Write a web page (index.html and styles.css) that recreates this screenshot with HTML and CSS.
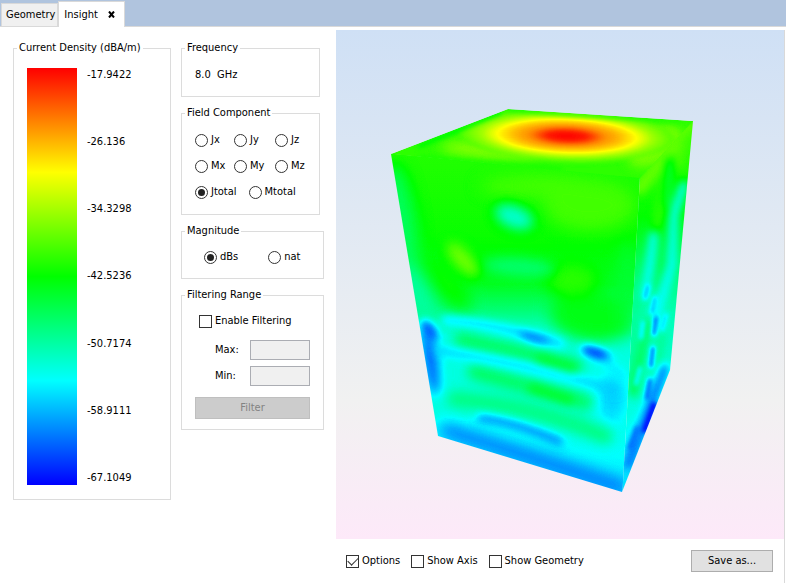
FILE: index.html
```html
<!DOCTYPE html>
<html lang="en">
<head>
  <meta charset="UTF-8" />
  <meta name="viewport" content="width=device-width, initial-scale=1.0"/>
  <title>Insight</title>
  <link rel="stylesheet" href="styles.css">
</head>
<body>

  <!-- Tabs -->
  <nav class="tabs">
    <a class="tab" href="#geometry">Geometry</a>
    <div class="tab active">
      <a href="#insight">Insight</a>
      <button type="button" class="close" aria-label="Close">
        <svg width="7" height="7" viewBox="0 0 7 7"><path d="M1 0.5L6 6.5M6 0.5L1 6.5" stroke="#000" stroke-width="2"/></svg>
      </button>
    </div>
  </nav>

  <main class="insight" id="insight">

    <!-- Color scale -->
    <fieldset class="density">
      <legend>Current Density (dBA/m)</legend>
      <div class="scale">
        <div class="scale-bar"></div>
        <div class="scale-values">
          <span>-17.9422</span>
          <span>-26.136</span>
          <span>-34.3298</span>
          <span>-42.5236</span>
          <span>-50.7174</span>
          <span>-58.9111</span>
          <span>-67.1049</span>
        </div>
      </div>
    </fieldset>

    <!-- Settings -->
    <form class="settings">
      <fieldset class="narrow frequency">
        <legend>Frequency</legend>
        <span>8.0&nbsp; GHz</span>
      </fieldset>

      <fieldset class="narrow component">
        <legend>Field Component</legend>
        <div class="radio-grid">
          <label><input type="radio" name="component">Jx</label>
          <label><input type="radio" name="component">Jy</label>
          <label><input type="radio" name="component">Jz</label>
          <label><input type="radio" name="component">Mx</label>
          <label><input type="radio" name="component">My</label>
          <label><input type="radio" name="component">Mz</label>
        </div>
        <div class="radio-row">
          <label><input type="radio" name="component" checked>Jtotal</label>
          <label><input type="radio" name="component">Mtotal</label>
        </div>
      </fieldset>

      <fieldset class="magnitude">
        <legend>Magnitude</legend>
        <div class="radio-row">
          <label><input type="radio" name="magnitude" checked>dBs</label>
          <label><input type="radio" name="magnitude">nat</label>
        </div>
      </fieldset>

      <fieldset class="filtering">
        <legend>Filtering Range</legend>
        <label class="enable"><input type="checkbox">Enable Filtering</label>
        <div class="range"><label for="max">Max:</label><input type="text" id="max" disabled></div>
        <div class="range"><label for="min">Min:</label><input type="text" id="min" disabled></div>
        <button type="button" class="filter-btn" disabled>Filter</button>
      </fieldset>
    </form>

    <!-- 3D view -->
    <section class="view">
      <div class="scene">
        <svg viewBox="336 30 448 509" role="img" aria-label="Current density on the box">
          <defs>
            <!-- gray level -> blue, cyan, green, yellow, red -->
            <filter id="jet" filterUnits="userSpaceOnUse" x="336" y="30" width="448" height="509" color-interpolation-filters="sRGB">
              <feComponentTransfer>
                <feFuncR type="table" tableValues="0 0 0 1 1"/>
                <feFuncG type="table" tableValues="0 1 1 1 0"/>
                <feFuncB type="table" tableValues="1 1 0 0 0"/>
              </feComponentTransfer>
            </filter>
            <clipPath id="box"><path d="M391 154L508 109L693 121L670 370L622 492L438 436Z"/></clipPath>
            <clipPath id="top"><path d="M391 154L508 109L693 121L640 178Z"/></clipPath>
            <clipPath id="front"><path d="M385 153L640 177L622 500L432 440Z"/></clipPath>
            <clipPath id="side"><path d="M640 177L700 112L675 375L622 500Z"/></clipPath>
            <linearGradient id="frontBase" gradientUnits="userSpaceOnUse" x1="0" y1="154" x2="0" y2="480">
              <stop offset="0" stop-color="#888"/>
              <stop offset="0.25" stop-color="#828282"/>
              <stop offset="0.4" stop-color="#787878"/>
              <stop offset="0.48" stop-color="#626262"/>
              <stop offset="0.56" stop-color="#484848"/>
              <stop offset="0.8" stop-color="#484848"/>
              <stop offset="1" stop-color="#3c3c3c"/>
            </linearGradient>
            <linearGradient id="sideBase" gradientUnits="userSpaceOnUse" x1="640" y1="150" x2="655" y2="480">
              <stop offset="0" stop-color="#8c8c8c"/>
              <stop offset="0.2" stop-color="#808080"/>
              <stop offset="0.35" stop-color="#686868"/>
              <stop offset="0.5" stop-color="#525252"/>
              <stop offset="0.75" stop-color="#4a4a4a"/>
              <stop offset="1" stop-color="#383838"/>
            </linearGradient>
            <radialGradient id="hot">
              <stop offset="0" stop-color="#fff"/>
              <stop offset="0.18" stop-color="#fafafa"/>
              <stop offset="0.35" stop-color="#dcdcdc"/>
              <stop offset="0.5" stop-color="#d0d0d0"/>
              <stop offset="0.66" stop-color="#bebebe"/>
              <stop offset="0.8" stop-color="#a6a6a6"/>
              <stop offset="1" stop-color="#929292"/>
            </radialGradient>
          </defs>

          <g clip-path="url(#box)">
            <g filter="url(#jet)">
              <!-- front face -->
              <g clip-path="url(#front)">
                <rect x="336" y="100" width="320" height="420" fill="url(#frontBase)"/>
                <g class="blur-8">
                  <ellipse cx="590" cy="205" rx="46" ry="26" fill="#909090"/>
                  <ellipse cx="540" cy="186" rx="60" ry="12" fill="#909090"/>
                  <ellipse cx="402" cy="225" rx="14" ry="62" transform="rotate(-8 402 225)" fill="#686868"/>
                  <ellipse cx="418" cy="295" rx="15" ry="34" transform="rotate(-25 418 295)" fill="#585858"/>
                  <ellipse cx="448" cy="285" rx="12" ry="32" transform="rotate(-40 448 285)" fill="#828282"/>
                  <ellipse cx="592" cy="316" rx="42" ry="26" transform="rotate(8 592 316)" fill="#7a7a7a"/>
                  <ellipse cx="628" cy="290" rx="10" ry="50" fill="#727272"/>
                  <ellipse cx="572" cy="280" rx="26" ry="16" fill="#8a8a8a"/>
                  <ellipse cx="612" cy="398" rx="14" ry="26" fill="#343434"/>
                  <path d="M445 430Q530 456 622 488" stroke="#181818" stroke-width="14"/>
                </g>
                <g class="blur-6">
                  <ellipse cx="514" cy="217" rx="20" ry="11" transform="rotate(22 514 217)" fill="#4c4c4c"/>
                  <ellipse cx="463" cy="260" rx="9" ry="22" transform="rotate(-42 463 260)" fill="#9c9c9c"/>
                  <ellipse cx="519" cy="267" rx="36" ry="9" transform="rotate(4 519 267)" fill="#646464"/>
                  <path d="M462 340Q510 350 575 366" stroke="#686868" stroke-width="17"/>
                  <path d="M475 372Q520 384 585 402" stroke="#686868" stroke-width="16"/>
                  <path d="M455 399Q530 405 605 436" stroke="#606060" stroke-width="16"/>
                  <ellipse cx="431" cy="362" rx="6" ry="34" transform="rotate(-8 431 362)" fill="#101010"/>
                </g>
                <g class="blur-4">
                  <path d="M445 320Q500 324 560 344" stroke="#323232" stroke-width="8"/>
                  <path d="M440 351Q520 362 615 390" stroke="#343434" stroke-width="8"/>
                  <path d="M480 418Q515 422 560 442" stroke="#181818" stroke-width="6"/>
                  <path d="M540 359L572 369" stroke="#787878" stroke-width="8"/>
                  <path d="M532 388L570 400" stroke="#787878" stroke-width="8"/>
                  <ellipse cx="429" cy="330" rx="6" ry="12" transform="rotate(-35 429 330)" fill="#141414"/>
                  <ellipse cx="534" cy="338" rx="16" ry="4" transform="rotate(18 534 338)" fill="#181818"/>
                  <ellipse cx="596" cy="353" rx="16" ry="5" transform="rotate(20 596 353)" fill="#080808"/>
                  <path d="M606 362L622 376" stroke="#3c3c3c" stroke-width="10"/>
                </g>
              </g>

              <!-- side face -->
              <g clip-path="url(#side)">
                <rect x="600" y="100" width="100" height="420" fill="url(#sideBase)"/>
                <g class="blur-4">
                  <path d="M640 188L688 126" stroke="#989898" stroke-width="14"/>
                  <path d="M678 165L684 130" stroke="#949494" stroke-width="7"/>
                  <path d="M654 240L668 165" stroke="#8c8c8c" stroke-width="8"/>
                  <path d="M670 160L667 205" stroke="#646464" stroke-width="5"/>
                  <path d="M684 185L674 215L672 265L655 320" stroke="#3c3c3c" stroke-width="8"/>
                  <path d="M654 235L646 295" stroke="#3c3c3c" stroke-width="8"/>
                  <path d="M662 258L652 290" stroke="#707070" stroke-width="4"/>
                  <path d="M636 300L630 390" stroke="#606060" stroke-width="6"/>
                  <path d="M648 320L634 395" stroke="#747474" stroke-width="6"/>
                  <path d="M662 335L654 380" stroke="#606060" stroke-width="6"/>
                  <path d="M664 368L646 418L628 465" stroke="#181818" stroke-width="9"/>
                </g>
                <g class="blur-2">
                  <path d="M648 286L645 298M655 298L652 312" stroke="#2c2c2c" stroke-width="4"/>
                  <path d="M656 318L654 334M653 348L651 366M650 380L647 398" stroke="#141414" stroke-width="4"/>
                  <path d="M643 322L641 338M640 368L636 384M666 315L662 330" stroke="#2c2c2c" stroke-width="3"/>
                  <path d="M637 428L630 448" stroke="#181818" stroke-width="4"/>
                  <path d="M654 405L645 430" stroke="#000" stroke-width="6"/>
                </g>
              </g>

              <!-- top face -->
              <g clip-path="url(#top)">
                <rect x="380" y="100" width="330" height="90" fill="#8b8b8b"/>
                <g class="blur-6">
                  <ellipse cx="490" cy="150" rx="50" ry="8" transform="rotate(4 490 150)" fill="#a2a2a2"/>
                  <ellipse cx="655" cy="146" rx="30" ry="16" transform="rotate(-30 655 146)" fill="#a0a0a0"/>
                </g>
                <g class="blur-2">
                  <ellipse cx="567" cy="136" rx="108" ry="26" transform="rotate(2 567 136)" fill="url(#hot)"/>
                  <path d="M420 146L500 113" stroke="#7c7c7c" stroke-width="4"/>
                  <path d="M420 157L560 169" stroke="#848484" stroke-width="3"/>
                  <path d="M510 111L680 122" stroke="#868686" stroke-width="3"/>
                </g>
              </g>
            </g>
          </g>
        </svg>
      </div>

      <div class="view-bar">
        <label><input type="checkbox" checked>Options</label>
        <label><input type="checkbox">Show Axis</label>
        <label><input type="checkbox">Show Geometry</label>
        <button type="button" class="save-btn">Save as...</button>
      </div>
    </section>

  </main>
</body>
</html>
```
FILE: styles.css
```css
* {
  box-sizing: border-box;
}

body {
  margin: 0;
  min-height: 100vh;
  display: flex;
  flex-direction: column;
  background: #fff;
  color: #000;
  font-family: Tahoma, "DejaVu Sans Condensed", "Noto Sans", sans-serif;
  font-size: 11px;
  line-height: 14px;
}

input, button {
  font: inherit;
  color: inherit;
  margin: 0;
}

/* Tabs */
.tabs {
  display: flex;
  align-items: flex-end;
  height: 27px;
  background: #b0c4de;
  border-bottom: 1px solid #d9d9d9;
}

.tabs a {
  color: #000;
  text-decoration: none;
}

.tab {
  height: 23px;
  margin-left: 1px;
  padding: 4px 2px 0 4px;
  background: #f0f0f0;
  border: 1px solid #d9d9d9;
  border-bottom: none;
}

.tab.active {
  display: flex;
  align-items: center;
  gap: 10px;
  height: 26px;
  margin: 0 0 -1px 0;
  padding: 0 9px 0 5px;
  background: #fff;
}

.close {
  display: flex;
  padding: 0;
  border: none;
  background: none;
}

/* Layout */
.insight {
  flex: 1;
  display: flex;
}

fieldset {
  --side: 13px;
  min-width: 0;
  margin: 0;
  padding: 0 var(--side);
  border: 1px solid #dcdcdc;
}

legend {
  margin-left: calc(3px - var(--side));
  padding: 0 2px;
}

label {
  display: flex;
  align-items: center;
  gap: 3px;
  white-space: nowrap;
}

/* Color scale */
.density {
  align-self: flex-start;
  flex: none;
  width: 158px;
  margin: 14px 10px 0 13px;
  padding-top: 13px;
  padding-bottom: 14px;
}

.scale {
  display: flex;
  gap: 10px;
}

.scale-bar {
  width: 50px;
  height: 417px;
  background: linear-gradient(#f00, #ff0, #0f0, #0ff, #00f);
}

.scale-values {
  display: flex;
  flex-direction: column;
  justify-content: space-between;
}

/* Settings */
.settings {
  flex: none;
  display: flex;
  flex-direction: column;
  gap: 9px;
  width: 143px;
  margin: 14px 12px 0 0;
}

.narrow {
  width: 139px;
}

.frequency {
  padding-top: 13px;
  padding-bottom: 14px;
}

.component {
  padding-top: 7px;
  padding-bottom: 9px;
}

.radio-grid {
  display: grid;
  grid-template-columns: 39px 41px 1fr;
}

.radio-grid label, .radio-row label {
  height: 26px;
}

.radio-row {
  display: flex;
  gap: 12px;
}

.magnitude {
  --side: 22px;
  padding-top: 6px;
  padding-bottom: 8px;
}

.magnitude .radio-row {
  gap: 30px;
}

.filtering {
  padding-top: 9px;
  padding-bottom: 10px;
}

.enable {
  height: 20px;
  margin: 0 0 9px 4px;
}

.range {
  display: flex;
  height: 20px;
  margin: 0 0 6px 20px;
}

.range label {
  width: 35px;
}

.range input {
  width: 60px;
  border: 1px solid #abadb3;
  background: #f0f0f0;
}

.filter-btn {
  display: block;
  width: 115px;
  height: 22px;
  margin-top: 11px;
  padding: 0;
  border: 1px solid #bfbfbf;
  background: #ccc;
  color: #838383;
}

/* Radios and check boxes */
input[type="radio"], input[type="checkbox"] {
  appearance: none;
  display: grid;
  place-items: center;
  width: 13px;
  height: 13px;
  border: 1px solid #333;
  background: #fff;
}

input[type="radio"] {
  border-radius: 50%;
}

input[type="radio"]:checked::after {
  content: "";
  width: 7px;
  height: 7px;
  border-radius: 50%;
  background: #222;
}

input[type="checkbox"]:checked::after {
  content: "";
  width: 9px;
  height: 5px;
  margin-bottom: 3px;
  border-left: 1px solid #333;
  border-bottom: 1px solid #333;
  transform: rotate(-45deg);
}

/* 3D view */
.view {
  flex: 1;
  display: flex;
  flex-direction: column;
  margin: 3px 1px 0 0;
  border-right: 1px solid #d9d9d9;
}

.scene {
  flex: 1;
  display: flex;
  background: linear-gradient(#cfe0f5, #f1f1f1 73%, #fde9f9);
}

.scene svg {
  flex: 1;
  width: 100%;
}

.scene path[stroke] {
  fill: none;
  stroke-linecap: round;
}

.blur-2 {
  filter: blur(2px);
}

.blur-4 {
  filter: blur(4px);
}

.blur-6 {
  filter: blur(6px);
}

.blur-8 {
  filter: blur(8px);
}

.view-bar {
  display: flex;
  align-items: center;
  gap: 11px;
  height: 44px;
  padding: 0 11px 0 10px;
}

.save-btn {
  width: 82px;
  height: 22px;
  margin-left: auto;
  padding: 0;
  border: 1px solid #adadad;
  background: #e1e1e1;
}
```
